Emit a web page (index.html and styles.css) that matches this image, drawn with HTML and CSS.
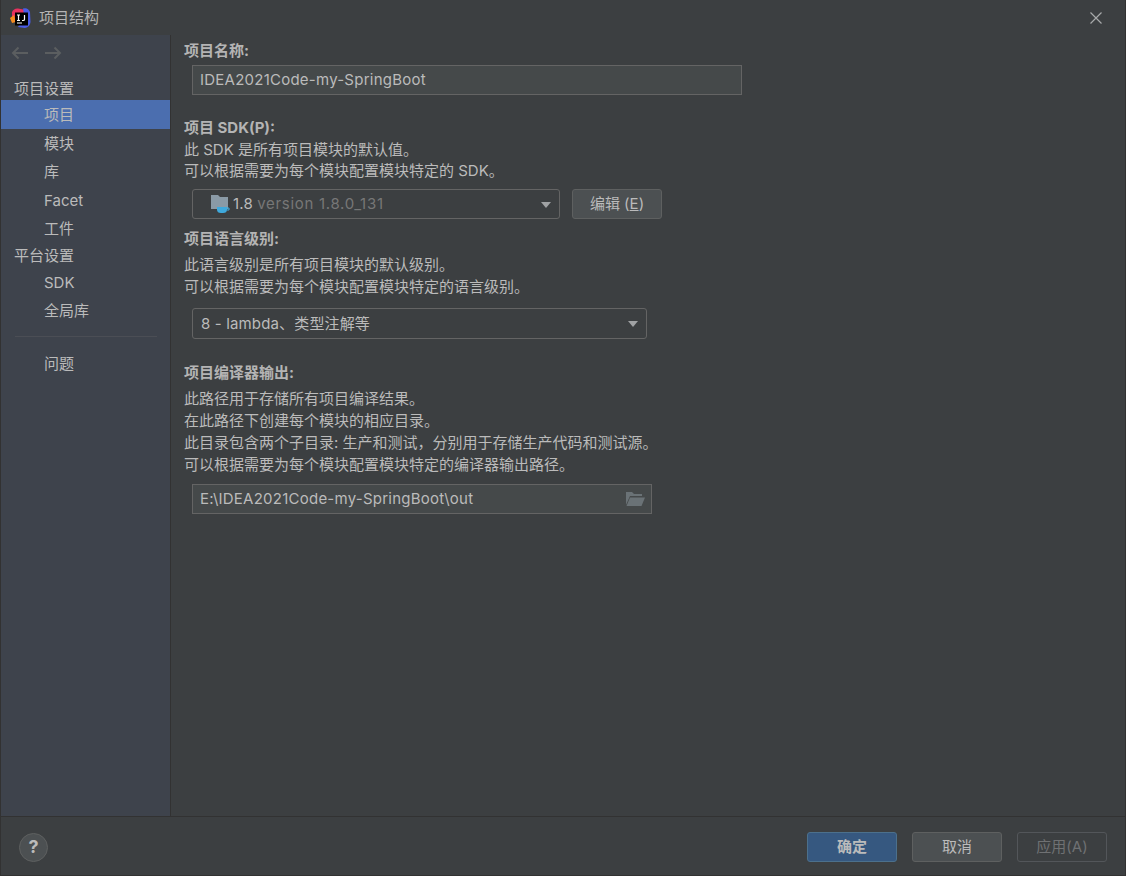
FILE: index.html
```html
<!DOCTYPE html>
<html lang="zh">
<head>
<meta charset="utf-8">
<title>项目结构</title>
<link rel="stylesheet" href="styles.css">
</head>
<body>
<div class="window">
  <header class="titlebar">
    <svg class="logo" width="22" height="22" viewBox="0 0 22 22">
      <path d="M2 5 Q4 1 8 1.500 L16 3 L14 8 L5 14 L2 12Z" fill="#e8315f"/>
      <path d="M0 11 L4 8 L6 15 L2 16Z" fill="#f58b1f"/>
      <path d="M13 1.500 Q18 0 20 5 L20.500 15 Q20 20 15 21 L8 20 L14 8Z" fill="#4a5ce8"/>
      <rect x="5" y="5.500" width="13" height="13" fill="#000"/>
      <rect x="7" y="15.500" width="5" height="1" fill="#fff"/>
      <path d="M7 8H10M8.500 8V13.500M7 13.500H10M14.500 8V12.500Q14.500 13.500 13 13.500H12" stroke="#fff" stroke-width="1.200" fill="none"/>
    </svg>
    <span class="title">项目结构</span>
    <svg class="close" width="12" height="12" viewBox="0 0 12 12"><path d="M.5.500L11.500 11.500M11.500.500L.5 11.500" stroke="#a7a9aa" stroke-width="1.200"/></svg>
  </header>
  <div class="body">
    <nav class="sidebar">
      <div class="arrows">
        <svg width="18" height="14" viewBox="0 0 18 14"><path d="M17 7H2M7.500 1.500L2 7L7.500 12.500" stroke="#5b5e60" stroke-width="2" fill="none"/></svg>
        <svg width="18" height="14" viewBox="0 0 18 14"><path d="M1 7H16M10.500 1.500L16 7L10.500 12.500" stroke="#5b5e60" stroke-width="2" fill="none"/></svg>
      </div>
      <div class="group first">项目设置</div>
      <div class="item selected">项目</div>
      <div class="item">模块</div>
      <div class="item">库</div>
      <div class="item">Facet</div>
      <div class="item">工件</div>
      <div class="group">平台设置</div>
      <div class="item">SDK</div>
      <div class="item">全局库</div>
      <div class="sep"></div>
      <div class="item">问题</div>
    </nav>
    <main class="content">
      <div class="label">项目名称:</div>
      <div class="field name-field">IDEA2021Code-my-SpringBoot</div>
      <div class="label sdk-label">项目 SDK(P):</div>
      <p class="desc sdk-desc">此 SDK 是所有项目模块的默认值。<br>可以根据需要为每个模块配置模块特定的 SDK。</p>
      <div class="sdk-row">
        <div class="combo sdk-combo">
          <svg class="sdk-icon" width="20" height="20" viewBox="0 0 20 20">
            <path d="M1 1H8L10 3H18V15H1Z" fill="#8a9aa6"/>
            <path d="M7 13H17V15.500Q17 19 13 19H11Q7 19 7 15.500Z" fill="#3fa9dc"/>
            <path d="M17 14H19V16H17" stroke="#3fa9dc" fill="none"/>
          </svg>
          <span class="sdk-text">1.8 <span class="muted">version 1.8.0_131</span></span>
          <span class="caret"></span>
        </div>
        <div class="button edit">编辑 (<u>E</u>)</div>
      </div>
      <div class="label lang-label">项目语言级别:</div>
      <p class="desc lang-desc">此语言级别是所有项目模块的默认级别。<br>可以根据需要为每个模块配置模块特定的语言级别。</p>
      <div class="combo lang-combo"><span>8 - lambda、类型注解等</span><span class="caret"></span></div>
      <div class="label out-label">项目编译器输出:</div>
      <p class="desc out-desc">此路径用于存储所有项目编译结果。<br>在此路径下创建每个模块的相应目录。<br>此目录包含两个子目录: 生产和测试，分别用于存储生产代码和测试源。<br>可以根据需要为每个模块配置模块特定的编译器输出路径。</p>
      <div class="field out-field">
        <span>E:\IDEA2021Code-my-SpringBoot\out</span>
        <svg width="20" height="16" viewBox="0 0 20 16"><path d="M1 1H7L9 3H17V5H5L1 14Z" fill="#6a7276"/><path d="M5 6.500H20L16.500 15H1.500Z" fill="#6a7276"/></svg>
      </div>
    </main>
  </div>
  <footer class="footer">
    <div class="help">?</div>
    <div class="actions">
      <div class="button primary">确定</div>
      <div class="button">取消</div>
      <div class="button disabled">应用(A)</div>
    </div>
  </footer>
</div>
</body>
</html>
```
FILE: styles.css
```css
* { box-sizing: border-box; }
html, body { margin: 0; height: 100%; }
body {
  background: #3c3f41;
  color: #bbbbbb;
  font-family: Inter, "Noto Sans CJK SC", sans-serif;
  font-size: 15px;
  line-height: 20px;
}
.window {
  width: 1126px;
  height: 876px;
  display: flex;
  flex-direction: column;
  border-left: 1px solid #323232;
  border-right: 1px solid #323232;
  border-bottom: 1px solid #323232;
}
.titlebar {
  height: 35px;
  flex: none;
  display: flex;
  align-items: center;
  padding-left: 9px;
  padding-right: 23px;
}
.title { margin-left: 7px; color: #b4b4b4; }
.close { margin-left: auto; }
.body { flex: 1; display: flex; min-height: 0; }
.sidebar {
  width: 170px;
  flex: none;
  background: #3e434c;
  border-right: 1px solid #323232;
}
.arrows {
  height: 35px;
  display: flex;
  gap: 15px;
  align-items: center;
  padding: 0 0 0 10px;
}
.group { height: 25px; line-height: 26px; padding-left: 13px; }
.group.first { height: 30px; line-height: 38px; }
.item { height: 28.500px; line-height: 30px; padding-left: 43px; }
.item.selected { background: #4b6eaf; }
.sep { height: 1px; margin: 11px 13px 12px 14px; background: #4b4e55; }
.content { flex: 1; padding-left: 13px; }
.label { font-weight: 700; color: #b4b4b4; line-height: 20px; }
.content > .label:first-child { margin-top: 6px; }
.desc { margin: 0; line-height: 22px; }
.field {
  height: 30px;
  background: #45494a;
  border: 1px solid #646464;
  display: flex;
  align-items: center;
  justify-content: space-between;
  margin-left: 8px;
  padding-left: 7px;
  letter-spacing: .24px;
}
.name-field { width: 550px; margin-top: 4px; }
.sdk-label { margin-top: 23px; }
.sdk-desc { margin-top: 1px; line-height: 21px; }
.sdk-row { display: flex; align-items: center; margin: 8px 0 0 8px; gap: 12px; }
.combo {
  height: 31px;
  border: 1px solid #646464;
  border-radius: 3px;
  display: flex;
  align-items: center;
  padding-left: 8px;
  position: relative;
  letter-spacing: .15px;
}
.sdk-combo { width: 368px; height: 30px; padding-left: 17px; }
.sdk-icon { margin-right: 3px; }
.muted { color: #777777; letter-spacing: .7px; }
.caret {
  position: absolute;
  right: 8px;
  top: 12px;
  width: 0;
  height: 0;
  border-left: 5.500px solid transparent;
  border-right: 5.500px solid transparent;
  border-top: 6px solid #a0a2a4;
}
.button {
  width: 90px;
  height: 30px;
  border: 1px solid #5e6060;
  border-radius: 3px;
  background: #4c5052;
  display: flex;
  align-items: center;
  justify-content: center;
}
.lang-label { margin-top: 10px; }
.lang-desc { margin-top: 5px; }
.lang-combo { width: 455px; margin: 10px 0 0 8px; }
.out-label { margin-top: 24px; }
.out-desc { margin-top: 5px; }
.out-field { width: 460px; margin-top: 8px; padding-right: 6px; }
.footer {
  height: 59px;
  flex: none;
  border-top: 1px solid #323232;
  display: flex;
  align-items: center;
  justify-content: space-between;
  padding: 2px 18px 0 18px;
}
.help {
  width: 29px;
  height: 29px;
  border-radius: 50%;
  border: 1px solid #5e6060;
  background: #4c5052;
  display: flex;
  align-items: center;
  justify-content: center;
  font-weight: 700;
  font-size: 18px;
}
.actions { display: flex; gap: 15px; }
.primary { background: #365880; border-color: #4c708c; font-weight: 700; }
.disabled { background: transparent; border-color: #53565a; color: #6f7173; }
```
